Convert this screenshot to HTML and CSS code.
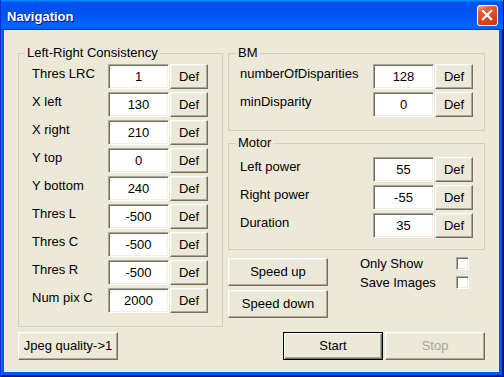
FILE: index.html
```html
<!DOCTYPE html>
<html lang="en">

<head>
    <meta charset="UTF-8">
    <meta name="viewport" content="width=device-width, initial-scale=1.0">
    <title>Navigation</title>
    <link rel="stylesheet" href="styles.css">
</head>

<body>
    <div class="window">
        <div class="titlebar">
            <span class="title">Navigation</span>
            <button class="close" aria-label="Close">
                <svg viewBox="0 0 21 21" width="19" height="19">
                    <path d="M5.5 5.5 L14.5 14.5 M14.5 5.5 L5.5 14.5" stroke="#fff" stroke-width="2.4" stroke-linecap="square" fill="none" />
                </svg>
            </button>
        </div>
        <div class="frame">
            <div class="client">
                <fieldset class="group lrc">
                    <legend>Left-Right Consistency</legend>
                    <div class="row"><label>Thres LRC</label><input class="field" value="1"><button class="btn def">Def</button></div>
                    <div class="row"><label>X left</label><input class="field" value="130"><button class="btn def">Def</button></div>
                    <div class="row"><label>X right</label><input class="field" value="210"><button class="btn def">Def</button></div>
                    <div class="row"><label>Y top</label><input class="field" value="0"><button class="btn def">Def</button></div>
                    <div class="row"><label>Y bottom</label><input class="field" value="240"><button class="btn def">Def</button></div>
                    <div class="row"><label>Thres L</label><input class="field" value="-500"><button class="btn def">Def</button></div>
                    <div class="row"><label>Thres C</label><input class="field" value="-500"><button class="btn def">Def</button></div>
                    <div class="row"><label>Thres R</label><input class="field" value="-500"><button class="btn def">Def</button></div>
                    <div class="row"><label>Num pix C</label><input class="field" value="2000"><button class="btn def">Def</button></div>
                </fieldset>

                <div class="side">
                    <fieldset class="group bm">
                        <legend>BM</legend>
                        <div class="row"><label>numberOfDisparities</label><input class="field" value="128"><button class="btn def">Def</button></div>
                        <div class="row"><label>minDisparity</label><input class="field" value="0"><button class="btn def">Def</button></div>
                    </fieldset>
                    <fieldset class="group motor">
                        <legend>Motor</legend>
                        <div class="row"><label>Left power</label><input class="field" value="55"><button class="btn def">Def</button></div>
                        <div class="row"><label>Right power</label><input class="field" value="-55"><button class="btn def">Def</button></div>
                        <div class="row"><label>Duration</label><input class="field" value="35"><button class="btn def">Def</button></div>
                    </fieldset>
                    <div class="speed">
                        <div class="speedBtns">
                            <button class="btn wide">Speed up</button>
                            <button class="btn wide">Speed down</button>
                        </div>
                        <div class="checks">
                            <label class="check"><span>Only Show</span><input type="checkbox" class="box"></label>
                            <label class="check"><span>Save Images</span><input type="checkbox" class="box"></label>
                        </div>
                    </div>
                </div>

                <div class="jpeg">
                    <button class="btn wide">Jpeg quality-&gt;1</button>
                </div>
                <div class="actions">
                    <button class="btn wide default">Start</button>
                    <button class="btn wide" disabled>Stop</button>
                </div>
            </div>
        </div>
    </div>
</body>

</html>
```

FILE: styles.css
```css
* {
    margin: 0;
    padding: 0;
    box-sizing: border-box;
}

html,
body {
    width: 504px;
    height: 377px;
    overflow: hidden;
    font-family: "Liberation Sans", Arial, sans-serif;
    font-size: 13px;
    line-height: 16px;
    color: #000;
}

.window {
    display: flex;
    flex-direction: column;
    width: 504px;
    height: 377px;
    background: #0055ea;
}

/* title bar */
.titlebar {
    display: flex;
    align-items: flex-start;
    justify-content: space-between;
    height: 30px;
    padding: 5px 6px 0 7px;
    background: linear-gradient(180deg, #0997ff, #0053ee 8%, #0050ee 40%, #06f 88%, #06f 93%, #005bff 95%, #003dd7 96%, #003dd7);
    box-shadow: inset 1px 0 #0831d9, inset -1px 0 #00138c;
}

.title {
    margin-top: 4px;
    font-weight: bold;
    font-size: 13px;
    color: #fff;
    text-shadow: 1px 1px #0f1089;
}

.close {
    display: flex;
    align-items: center;
    justify-content: center;
    width: 21px;
    height: 21px;
    border: 1px solid #fff;
    border-radius: 3px;
    background: linear-gradient(160deg, #f7b29b 0%, #e5603a 22%, #d8471f 60%, #c2381a 100%);
}

/* window border + client */
.frame {
    flex: 1;
    display: flex;
    padding: 0 5px 5px 4px;
    background: #0058ee;
    box-shadow: inset 1px 0 #0831d9, inset -1px -1px #00138c, inset -2px -2px #001ea0, inset 2px 0 #166aee;
}

.client {
    flex: 1;
    display: grid;
    grid-template-columns: 205px 257px;
    grid-template-rows: 282px auto;
    column-gap: 5px;
    row-gap: 5px;
    align-items: start;
    padding: 15px 0 0 14px;
    background-color: #ece9d8;
}

/* group boxes */
.group {
    border: 1px solid #d0d0bf;
    min-inline-size: 0;
}

.group legend {
    padding: 0 2px;
    line-height: 16px;
}

.lrc {
    height: 282px;
    padding: 3px 6px 13px 6px;
}

.lrc .row {
    padding-left: 7px;
}

.lrc label {
    width: 76px;
}

.bm,
.motor {
    padding: 3px 7px 13px 7px;
}

.motor {
    margin-top: 4px;
    padding-top: 6px;
    padding-bottom: 11px;
}

.bm .row,
.motor .row {
    padding-left: 4px;
}

.bm label,
.motor label {
    width: 133px;
}

.row {
    display: flex;
    align-items: flex-start;
    height: 25px;
    margin-bottom: 3px;
}

.row:last-child {
    margin-bottom: 0;
}

.row label {
    padding-top: 2px;
    white-space: nowrap;
}

/* sunken edit box */
.field {
    width: 61px;
    height: 25px;
    font: inherit;
    text-align: center;
    color: #000;
    background: #fff;
    border: 1px solid;
    border-color: #aca899 #fff #fff #aca899;
    box-shadow: inset 1px 1px #716f64, inset -1px -1px #f1efe2;
    outline: none;
}

/* raised push button */
.btn {
    font: inherit;
    color: #000;
    background-color: #ece9d8;
    border: 1px solid;
    border-color: #fff #716f64 #716f64 #fff;
    box-shadow: inset -1px -1px #aca899, inset 1px 1px #f1efe2;
}

.btn:disabled {
    color: #aca899;
}

.def {
    width: 38px;
    height: 25px;
    margin-left: 1px;
}

.wide {
    width: 100px;
    height: 28px;
}

.default {
    border: 1px solid #000;
    box-shadow: inset 1px 1px #fff, inset -1px -1px #716f64, inset -2px -2px #aca899;
}

/* speed + checkboxes */
.speed {
    display: flex;
    margin-top: 4px;
}

.speedBtns {
    display: flex;
    flex-direction: column;
    gap: 4px;
    padding-top: 4px;
}

.checks {
    display: flex;
    flex-direction: column;
    margin-left: 32px;
}

.check {
    display: flex;
    align-items: center;
    height: 19px;
}

.check span {
    width: 96px;
}

.box {
    appearance: none;
    width: 13px;
    height: 13px;
    background: #fff;
    border: 1px solid;
    border-color: #aca899 #fff #fff #aca899;
    box-shadow: inset 1px 1px #716f64, inset -1px -1px #f1efe2;
}

.actions {
    display: flex;
    justify-content: flex-end;
    gap: 2px;
}
```
